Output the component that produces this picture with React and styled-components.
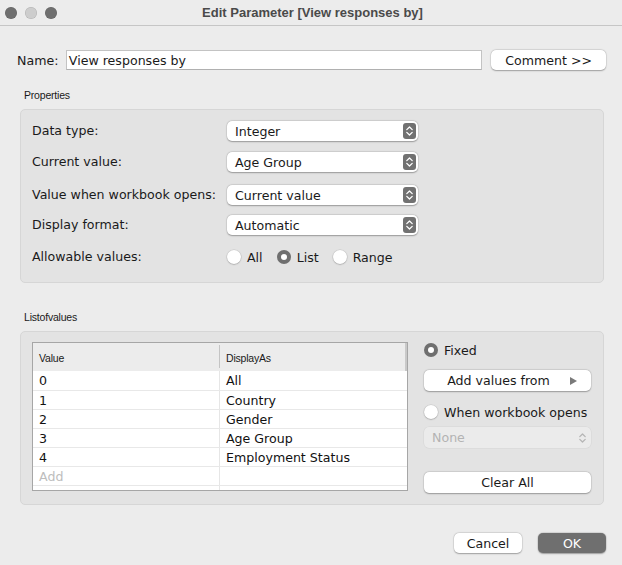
import React from "react";
import styled, { createGlobalStyle } from "styled-components";

const GlobalStyle = createGlobalStyle`
  html, body {
    margin: 0;
    padding: 0;
    background: #ececec;
  }
  body {
    font-family: "DejaVu Sans", "Noto Sans", sans-serif;
    font-size: 12.6px;
    color: #1a1a1a;
  }
`;

const Window = styled.div`
  width: 622px;
  height: 565px;
  background: #ececec;
  display: flex;
  flex-direction: column;
  overflow: hidden;
  white-space: nowrap;
`;

const TitleBar = styled.div`
  height: 25px;
  border-bottom: 1px solid #c6c6c6;
  display: flex;
  align-items: center;
  position: relative;
  padding-left: 5px;
  gap: 8px;
`;

const Light = styled.span`
  width: 12px;
  height: 12px;
  border-radius: 50%;
  background: ${(p) => (p.dim ? "#cdcdcd" : "#6f6f6f")};
  box-shadow: inset 0 0 0 0.5px rgba(0, 0, 0, 0.15);
`;

const Title = styled.div`
  position: absolute;
  left: 0;
  right: 0;
  padding-left: 3px;
  text-align: center;
  font-family: "Liberation Sans", Arial, sans-serif;
  font-weight: bold;
  font-size: 13px;
  color: #4a4a4a;
  pointer-events: none;
`;

const NameRow = styled.div`
  display: flex;
  align-items: center;
  margin-top: 24px;
  padding: 0 16px 0 17px;
  height: 20px;
`;

const NameLabel = styled.span`
  width: 49px;
`;

const TextField = styled.div`
  width: 414px;
  height: 18px;
  background: #fff;
  border: 1px solid #c3c3c3;
  border-bottom-color: #b0b0b0;
  display: flex;
  align-items: center;
  padding-left: 2px;
  box-sizing: content-box;
`;

const PushButton = styled.div`
  height: ${(p) => p.h || 20}px;
  width: ${(p) => p.w}px;
  box-sizing: border-box;
  border-radius: 5px;
  background: ${(p) => (p.primary ? "#6f6f6f" : "#fff")};
  color: ${(p) => (p.primary ? "#fff" : "#1a1a1a")};
  box-shadow: 0 0.5px 1.5px rgba(0, 0, 0, 0.3), 0 0 0 0.5px rgba(0, 0, 0, 0.08);
  display: flex;
  align-items: center;
  justify-content: center;
  position: relative;
  padding-right: ${(p) => p.pr || 0}px;
  margin-left: ${(p) => p.ml || 0}px;
  margin-top: ${(p) => p.mt || 0}px;
`;

const Triangle = styled.span`
  position: absolute;
  right: 14px;
  top: 50%;
  margin-top: -4px;
  width: 0;
  height: 0;
  border-top: 4px solid transparent;
  border-bottom: 4px solid transparent;
  border-left: 7px solid #7a7a7a;
`;

const Section = styled.div`
  padding: 0 18px 0 20px;
  margin-top: ${(p) => p.mt}px;
`;

const SectionLabel = styled.div`
  font-family: "Liberation Sans", Arial, sans-serif;
  font-size: 10.5px;
  line-height: 14px;
  color: #1a1a1a;
  padding-left: 4px;
  letter-spacing: -0.2px;
  margin-bottom: 7px;
`;

const Panel = styled.div`
  height: 174px;
  box-sizing: border-box;
  background: #e3e3e3;
  border: 1px solid #d6d6d6;
  border-radius: 5px;
  padding: ${(p) => p.pad};
`;

const PropGrid = styled.div`
  display: grid;
  grid-template-columns: 195px 191px;
  grid-template-rows: 31px 33px 30px 32px 20px;
  align-items: start;
  & > span {
    line-height: 20px;
  }
`;

const Select = styled.div`
  height: ${(p) => p.h || 20}px;
  width: ${(p) => (p.w ? p.w + "px" : "auto")};
  box-sizing: border-box;
  border-radius: 5px;
  background: ${(p) => (p.disabled ? "#ebebeb" : "#fff")};
  color: ${(p) => (p.disabled ? "#b3b3b3" : "#1a1a1a")};
  box-shadow: ${(p) =>
    p.disabled
      ? "0 0 0 0.5px rgba(0,0,0,0.06)"
      : "0 0.5px 1.5px rgba(0, 0, 0, 0.3), 0 0 0 0.5px rgba(0, 0, 0, 0.08)"};
  display: flex;
  align-items: center;
  justify-content: space-between;
  padding: 0 2px 0 8px;
  margin-top: ${(p) => p.mt || 0}px;
`;

const Stepper = styled.span`
  width: 13px;
  height: 16px;
  border-radius: 3px;
  background: ${(p) => (p.disabled ? "transparent" : "#717171")};
  display: flex;
  align-items: center;
  justify-content: center;
`;

const RadioGroup = styled.div`
  display: flex;
  align-items: center;
  height: 20px;
`;

const RadioItem = styled.label`
  display: flex;
  align-items: center;
  gap: 6px;
  margin-right: ${(p) => p.mr || 0}px;
  margin-top: ${(p) => p.mt || 0}px;
  height: 16px;
`;

const RadioDot = styled.span`
  width: 14px;
  height: 14px;
  flex: none;
  border-radius: 50%;
  box-sizing: border-box;
  background: ${(p) => (p.on ? "#6f6f6f" : "#fff")};
  box-shadow: ${(p) =>
    p.on ? "none" : "0 0.5px 1.5px rgba(0,0,0,0.3), 0 0 0 0.5px rgba(0,0,0,0.08)"};
  display: flex;
  align-items: center;
  justify-content: center;
  &::after {
    content: "";
    display: ${(p) => (p.on ? "block" : "none")};
    width: 6px;
    height: 6px;
    border-radius: 50%;
    background: #fff;
  }
`;

const ListArea = styled.div`
  display: flex;
  gap: 16px;
`;

const Table = styled.div`
  width: 376px;
  height: 149px;
  box-sizing: border-box;
  border: 1px solid #a6a6a6;
  background: #fff;
  overflow: hidden;
`;

const HeaderRow = styled.div`
  display: grid;
  grid-template-columns: 187px 1fr;
  height: 28px;
  background: #ececec;
  font-family: "Liberation Sans", Arial, sans-serif;
  font-size: 10.5px;
  letter-spacing: -0.2px;
  border-right: 2px solid #c9c9c9;
`;

const HeaderCell = styled.div`
  display: flex;
  align-items: center;
  padding-left: 6px;
  padding-top: 1px;
  position: relative;
  &:first-child::after {
    content: "";
    position: absolute;
    right: 0;
    top: 2px;
    bottom: 3px;
    width: 1px;
    background: #c4c4c4;
  }
`;

const Row = styled.div`
  display: grid;
  grid-template-columns: 187px 1fr;
  height: 19px;
  border-top: ${(p) => (p.sep ? "1px solid #e8e8e8" : "none")};
  box-sizing: border-box;
  color: ${(p) => (p.muted ? "#bdbdbd" : "#111")};
`;

const Cell = styled.div`
  display: flex;
  align-items: center;
  padding-left: 6px;
  &:first-child {
    border-right: 1px solid #e6e6e6;
  }
`;

const SideColumn = styled.div`
  width: 167px;
  display: flex;
  flex-direction: column;
`;

const Footer = styled.div`
  display: flex;
  justify-content: flex-end;
  padding: 0 16px 0 0;
  margin-top: 28px;
`;

const StepperIcon = ({ color }) => (
  <svg width="9" height="12" viewBox="0 0 9 12">
    <path
      d="M1.8 4.6 L4.5 2 L7.2 4.6 M1.8 7.4 L4.5 10 L7.2 7.4"
      fill="none"
      stroke={color}
      strokeWidth="1.3"
      strokeLinecap="round"
      strokeLinejoin="round"
    />
  </svg>
);

const props = [
  ["Data type:", "Integer"],
  ["Current value:", "Age Group"],
  ["Value when workbook opens:", "Current value"],
  ["Display format:", "Automatic"],
];

const rows = [
  ["0", "All"],
  ["1", "Country"],
  ["2", "Gender"],
  ["3", "Age Group"],
  ["4", "Employment Status"],
];

const App = () => {
  return (
    <Window>
      <GlobalStyle />
      <TitleBar>
        <Light />
        <Light dim />
        <Light />
        <Title>Edit Parameter [View responses by]</Title>
      </TitleBar>

      <NameRow>
        <NameLabel>Name:</NameLabel>
        <TextField>View responses by</TextField>
        <PushButton w={115} ml={9}>
          Comment &gt;&gt;
        </PushButton>
      </NameRow>

      <Section mt={18}>
        <SectionLabel>Properties</SectionLabel>
        <Panel pad="11px 11px">
          <PropGrid>
            {props.map(([label, value]) => (
              <React.Fragment key={label}>
                <span>{label}</span>
                <Select>
                  {value}
                  <Stepper>
                    <StepperIcon color="#fff" />
                  </Stepper>
                </Select>
              </React.Fragment>
            ))}
            <span>Allowable values:</span>
            <RadioGroup>
              <RadioItem mr={14}>
                <RadioDot />
                All
              </RadioItem>
              <RadioItem mr={14}>
                <RadioDot on />
                List
              </RadioItem>
              <RadioItem>
                <RadioDot />
                Range
              </RadioItem>
            </RadioGroup>
          </PropGrid>
        </Panel>
      </Section>

      <Section mt={27}>
        <SectionLabel>Listofvalues</SectionLabel>
        <Panel pad="10px 11px">
          <ListArea>
            <Table>
              <HeaderRow>
                <HeaderCell>Value</HeaderCell>
                <HeaderCell>DisplayAs</HeaderCell>
              </HeaderRow>
              {rows.map(([v, d], i) => (
                <Row key={v} sep={i > 0}>
                  <Cell>{v}</Cell>
                  <Cell>{d}</Cell>
                </Row>
              ))}
              <Row sep muted>
                <Cell>Add</Cell>
                <Cell />
              </Row>
              <Row sep>
                <Cell />
                <Cell />
              </Row>
            </Table>

            <SideColumn>
              <RadioItem>
                <RadioDot on />
                Fixed
              </RadioItem>
              <PushButton w={167} h={21} mt={12} pr={18}>
                Add values from
                <Triangle />
              </PushButton>
              <RadioItem mt={13}>
                <RadioDot />
                When workbook opens
              </RadioItem>
              <Select disabled w={167} h={21} mt={7}>
                None
                <Stepper disabled>
                  <StepperIcon color="#b5b5b5" />
                </Stepper>
              </Select>
              <PushButton w={167} h={21} mt={24}>
                Clear All
              </PushButton>
            </SideColumn>
          </ListArea>
        </Panel>
      </Section>

      <Footer>
        <PushButton w={68}>Cancel</PushButton>
        <PushButton w={68} ml={16} primary>
          OK
        </PushButton>
      </Footer>
    </Window>
  );
};

export default App;
